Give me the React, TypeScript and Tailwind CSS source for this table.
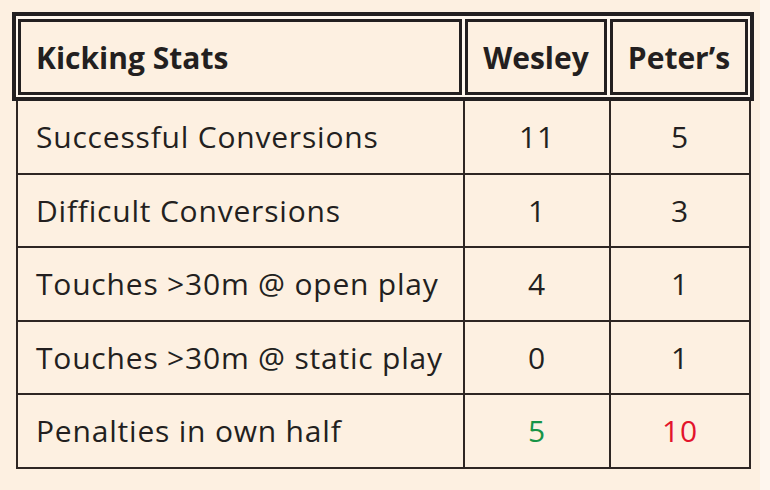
import React from "react";

const rows = [
  { label: "Successful Conversions", wesley: "11", peter: "5" },
  { label: "Difficult Conversions", wesley: "1", peter: "3" },
  { label: "Touches >30m @ open play", wesley: "4", peter: "1" },
  { label: "Touches >30m @ static play", wesley: "0", peter: "1" },
  { label: "Penalties in own half", wesley: "5", peter: "10", wesleyClass: "text-[#179447]", peterClass: "text-[#e3142c]" },
];

export default function App() {
  return (
    <div className="w-[770px] h-[490px] flex bg-[#fdf0e1] text-[#231f20] font-['Open_Sans',sans-serif] overflow-hidden">
      <div className="w-[760px] pl-[12px] pt-[12px]">
        {/* header, double border */}
        <div className="flex w-[742px] gap-[3px] border-4 border-[#231f20] bg-[#fff7ee] px-[2px] pt-[3px] pb-[2px]">
          <div className="w-[444px] h-[76px] flex items-center border-[3px] border-[#231f20] bg-[#fdf0e1] pl-[15px] text-[30px] font-bold">
            Kicking Stats
          </div>
          <div className="w-[142px] h-[76px] flex items-center justify-center border-[3px] border-[#231f20] bg-[#fdf0e1] text-[30px] font-bold">
            Wesley
          </div>
          <div className="w-[138px] h-[76px] flex items-center justify-center border-[3px] border-[#231f20] bg-[#fdf0e1] text-[30px] font-bold">
            Peter’s
          </div>
        </div>

        {/* body */}
        <div className="ml-[4px] w-[735px] border-x-2 border-[#2e2623]">
          {rows.map((r) => (
            <div key={r.label} className="flex h-[73.5px] border-b-2 border-[#2e2623] text-[30px] tracking-[0.8px]">
              <div className="w-[447px] flex items-center border-r-2 border-[#2e2623] pl-[18px]">{r.label}</div>
              <div className={`w-[146px] flex items-center justify-center border-r-2 border-[#2e2623] ${r.wesleyClass ?? ""}`}>
                {r.wesley}
              </div>
              <div className={`flex-1 flex items-center justify-center ${r.peterClass ?? ""}`}>{r.peter}</div>
            </div>
          ))}
        </div>
      </div>
      <div className="flex-1 bg-[#fef6ee]" />
    </div>
  );
}
